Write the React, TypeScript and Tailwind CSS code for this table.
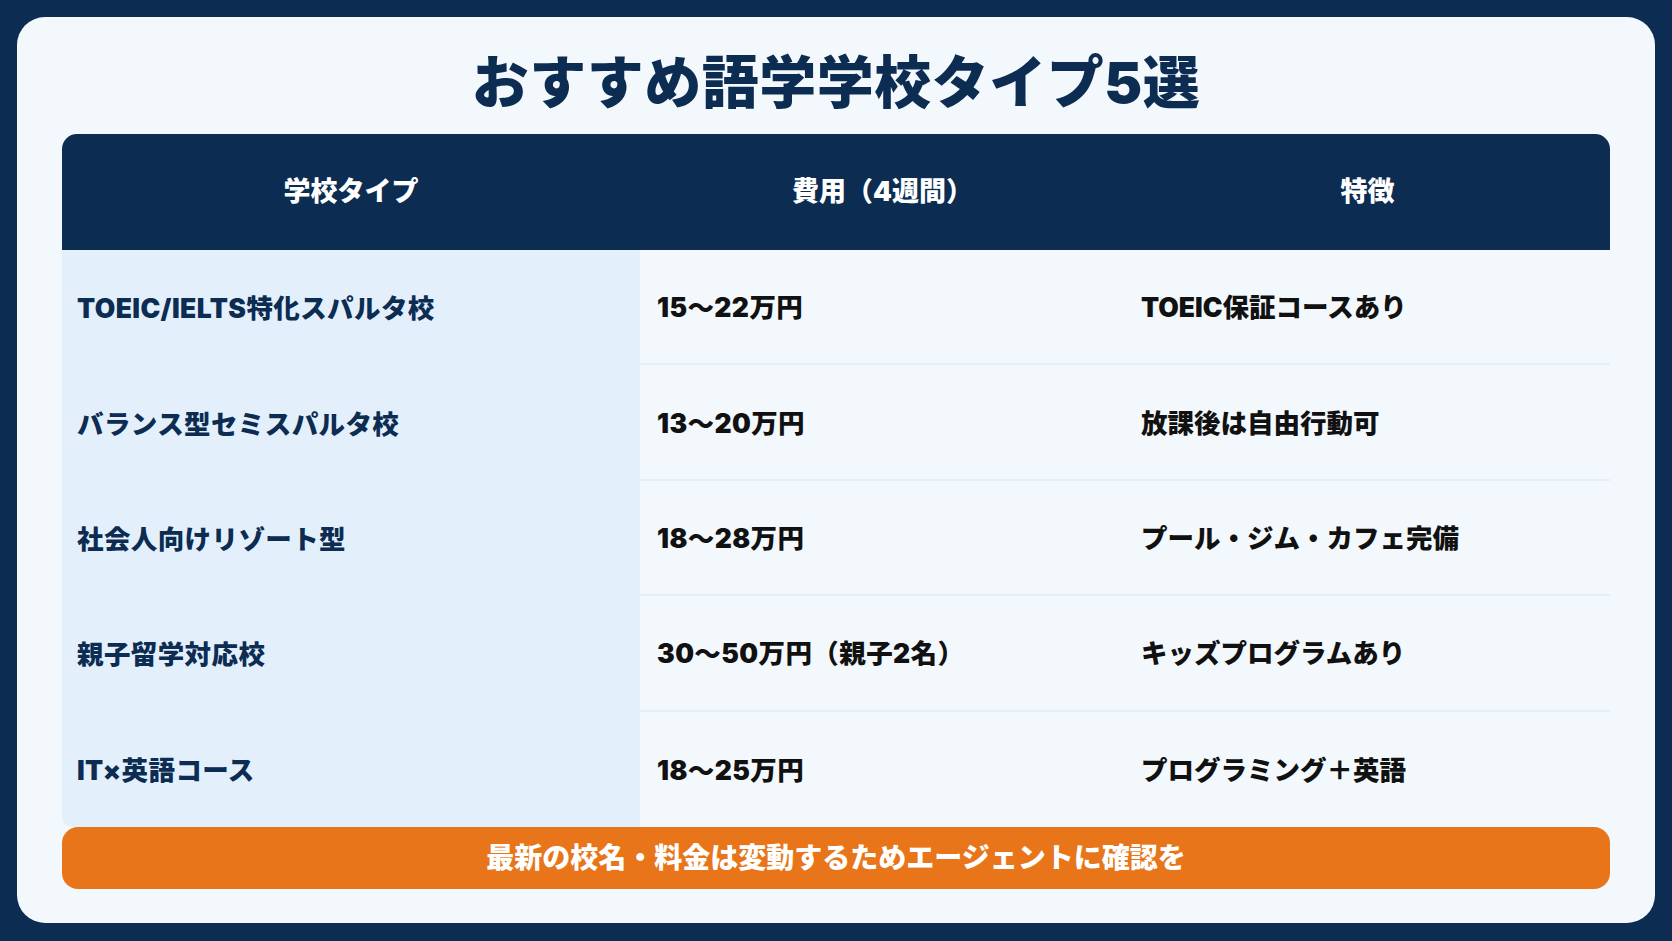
import React from 'react';

// --- Data ---
interface SchoolRow {
    type: string;
    cost: string;
    feature: string;
}

const rows: SchoolRow[] = [
    { type: 'TOEIC/IELTS特化スパルタ校', cost: '15〜22万円', feature: 'TOEIC保証コースあり' },
    { type: 'バランス型セミスパルタ校', cost: '13〜20万円', feature: '放課後は自由行動可' },
    { type: '社会人向けリゾート型', cost: '18〜28万円', feature: 'プール・ジム・カフェ完備' },
    { type: '親子留学対応校', cost: '30〜50万円（親子2名）', feature: 'キッズプログラムあり' },
    { type: 'IT×英語コース', cost: '18〜25万円', feature: 'プログラミング＋英語' },
];

const font = { fontFamily: 'Inter, "Noto Sans CJK JP", "Noto Sans", sans-serif' };

const App: React.FC = () => {
    return (
        <div className="min-h-screen w-full bg-[#0c2c52] p-[17px]" style={font}>
            <div className="rounded-[28px] bg-[#f3f8fc] px-[45px] pt-[28px] pb-[34px]">
                <h1 className="text-center text-[57px] leading-[76px] font-black text-[#0c2c52] tracking-[0.5px]">
                    おすすめ語学学校タイプ5選
                </h1>

                <div className="mt-[13px]">
                    {/* header */}
                    <div className="grid grid-cols-[578px_485px_1fr] h-[116px] items-center rounded-t-[15px] bg-[#0c2c52] text-white text-[27px] font-black">
                        <div className="text-center">学校タイプ</div>
                        <div className="text-center">費用（4週間）</div>
                        <div className="text-center">特徴</div>
                    </div>

                    {/* body */}
                    {rows.map((row, i) => (
                        <div key={i} className="grid grid-cols-[578px_485px_1fr] h-[115.4px] text-[26.5px] font-black">
                            <div className={`flex items-center bg-[#e3f0fc] px-[15px] pt-[3px] text-[#0c2c52] tracking-[0.4px] ${i === rows.length - 1 ? 'rounded-bl-[10px]' : ''}`}>
                                {row.type}
                            </div>
                            <div className={`flex items-center px-[17px] pt-[3px] text-[#111111] tracking-[0.4px] ${i < rows.length - 1 ? 'border-b-2 border-[#e5eef9]' : ''}`}>
                                {row.cost}
                            </div>
                            <div className={`flex items-center px-[16px] pt-[3px] text-[#111111] ${i < rows.length - 1 ? 'border-b-2 border-[#e5eef9]' : ''}`}>
                                {row.feature}
                            </div>
                        </div>
                    ))}

                    {/* note */}
                    <div className="flex h-[62px] items-center justify-center rounded-[16px] bg-[#e8751a] text-[28px] font-black text-white">
                        最新の校名・料金は変動するためエージェントに確認を
                    </div>
                </div>
            </div>
        </div>
    );
};

export default App;
